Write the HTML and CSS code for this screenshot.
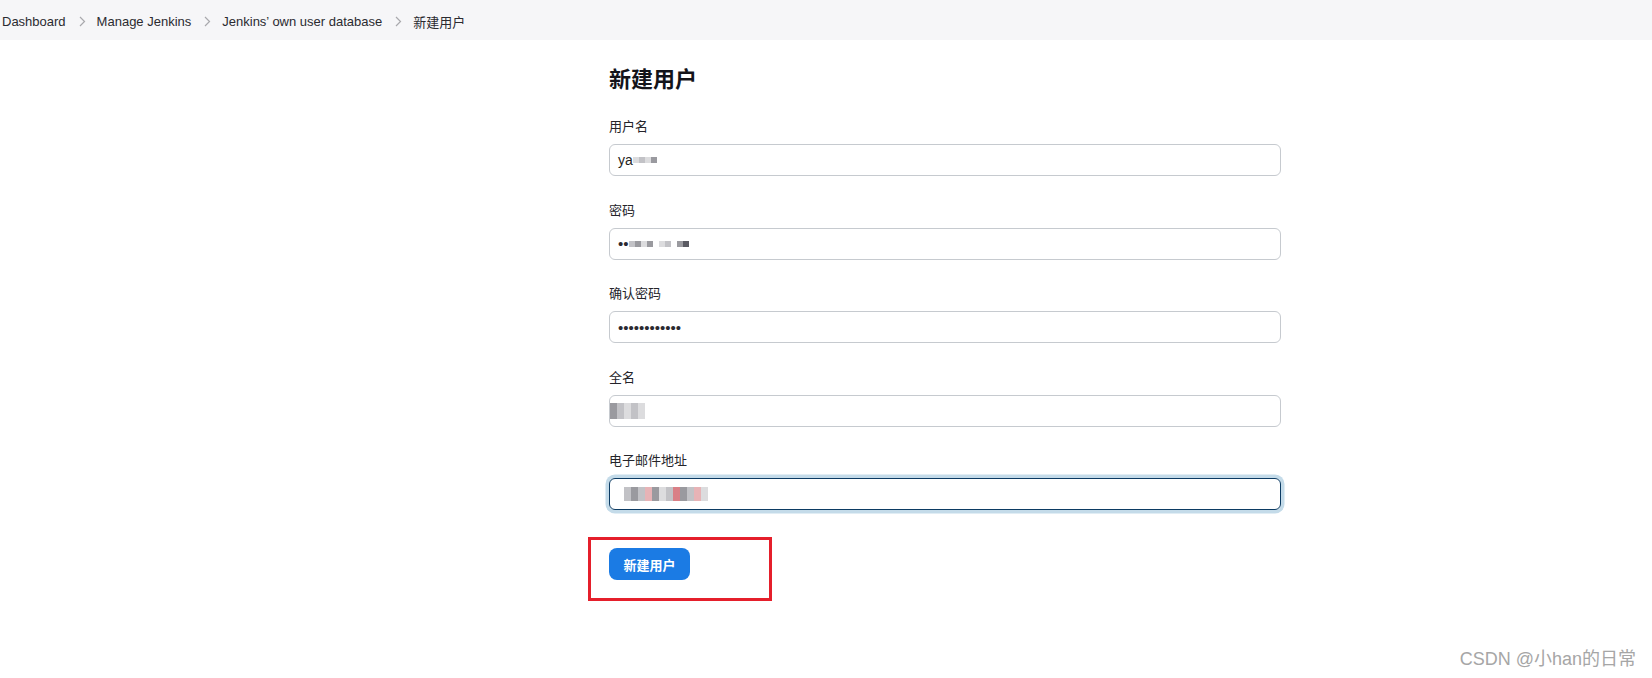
FILE: index.html
```html
<!DOCTYPE html>
<html lang="zh">
<head>
<meta charset="utf-8">
<title>新建用户</title>
<link rel="stylesheet" href="styles.css">
</head>
<body>
<nav class="crumbs">
  <span class="crumb">Dashboard</span>
  <span class="sep"><svg width="7" height="11" viewBox="0 0 7 11"><path d="M1 1l4.5 4.5L1 10" fill="none" stroke="#a9a9ad" stroke-width="1.2"/></svg></span>
  <span class="crumb">Manage Jenkins</span>
  <span class="sep"><svg width="7" height="11" viewBox="0 0 7 11"><path d="M1 1l4.5 4.5L1 10" fill="none" stroke="#a9a9ad" stroke-width="1.2"/></svg></span>
  <span class="crumb">Jenkins’ own user database</span>
  <span class="sep"><svg width="7" height="11" viewBox="0 0 7 11"><path d="M1 1l4.5 4.5L1 10" fill="none" stroke="#a9a9ad" stroke-width="1.2"/></svg></span>
  <span class="crumb">新建用户</span>
</nav>

<main class="main">
  <h1 class="title">新建用户</h1>

  <div class="field">
    <label class="label">用户名</label>
    <div class="input"><span class="val">ya</span><span class="mosaic"><i class="m3"></i><i class="m2"></i><i class="m3"></i><i class="m1"></i></span></div>
  </div>

  <div class="field">
    <label class="label">密码</label>
    <div class="input"><span class="dots">••</span><span class="mosaic"><i class="m2"></i><i class="m1"></i><i class="m3"></i><i class="m1"></i><i class="gap"></i><i class="m3"></i><i class="m2"></i><i class="gap"></i><i class="m1"></i><i class="m4"></i></span></div>
  </div>

  <div class="field">
    <label class="label">确认密码</label>
    <div class="input"><span class="dots">••••••••••••</span></div>
  </div>

  <div class="field">
    <label class="label">全名</label>
    <div class="input"><span class="mosaic big"><i class="m1"></i><i class="m2"></i><i class="m3"></i><i class="m2"></i><i class="m3"></i></span></div>
  </div>

  <div class="field">
    <label class="label">电子邮件地址</label>
    <div class="input focus"><span class="mosaic mail"><i class="m2"></i><i class="m1"></i><i class="m2"></i><i class="p1"></i><i class="m1"></i><i class="m3"></i><i class="m2"></i><i class="p2"></i><i class="m1"></i><i class="m2"></i><i class="p1"></i><i class="m3"></i></span></div>
  </div>

  <div class="actions">
    <button class="btn">新建用户</button>
  </div>
</main>

<div class="watermark">CSDN @小han的日常</div>
</body>
</html>
```

FILE: styles.css
```css
html, body {
  margin: 0;
  padding: 0;
  background: #ffffff;
  font-family: "Liberation Sans", "Noto Sans CJK SC", sans-serif;
  color: #1f1f24;
}

.crumbs {
  box-sizing: border-box;
  height: 40px;
  background: #f6f6f8;
  display: flex;
  align-items: center;
  padding: 3px 0 0 2px;
  font-size: 13px;
  color: #2b2b30;
}

.sep {
  display: flex;
  align-items: center;
  margin: 0 11px 0 13px;
}

.main {
  margin-left: 609px;
  width: 672px;
  padding-top: 25px;
}

.title {
  margin: 0 0 23px 0;
  font-size: 22px;
  line-height: 30px;
  font-weight: 700;
  color: #14141a;
}

.field {
  margin-bottom: 25.5px;
}

.label {
  display: block;
  font-size: 13px;
  line-height: 18px;
  color: #24242a;
  margin-bottom: 8px;
}

.input {
  box-sizing: border-box;
  height: 32px;
  border: 1px solid #c6cacf;
  border-radius: 6px;
  display: flex;
  align-items: center;
  padding-left: 8px;
  font-size: 14px;
  color: #1f1f24;
}

.input.focus {
  border: 1.5px solid #0c3b63;
  box-shadow: 0 0 0 3.5px #c4dbe9;
  padding-left: 4px;
}

.val {
  line-height: 1;
}

.dots {
  font-size: 15px;
  letter-spacing: 0;
  color: #2a2a30;
}

.mosaic {
  display: inline-flex;
  align-items: center;
}

.mosaic i {
  display: inline-block;
  width: 6px;
  height: 6px;
}

.mosaic.big {
  margin-left: -8px;
}

.mosaic.big i {
  width: 7px;
  height: 16px;
}

.mosaic.mail {
  margin-left: 10px;
}

.mosaic.mail i {
  width: 7px;
  height: 14px;
}

.mosaic .m1 { background: #9a9a9f; }
.mosaic .m2 { background: #c2c2c6; }
.mosaic .m3 { background: #dcdcde; }
.mosaic .m4 { background: #5a5a62; }
.mosaic .p1 { background: #e7b3b6; }
.mosaic .p2 { background: #d97f86; }
.mosaic .gap { background: transparent; }

.actions {
  display: inline-block;
  margin-top: 1.5px;
  margin-left: -21px;
  border: 3px solid #e51f2b;
  padding: 8px 79px 18px 18px;
}

.btn {
  display: block;
  width: 81px;
  height: 32px;
  border: none;
  border-radius: 8px;
  background: #1b7be4;
  color: #ffffff;
  font-family: "Liberation Sans", "Noto Sans CJK SC", sans-serif;
  font-size: 13px;
  font-weight: 700;
  padding: 0;
}

.watermark {
  position: absolute;
  right: 16px;
  bottom: 8px;
  font-size: 18px;
  color: #a6a6a6;
  text-shadow: 0 0 1px #ffffff;
  font-family: "Liberation Sans", "Noto Sans CJK SC", sans-serif;
}
```
